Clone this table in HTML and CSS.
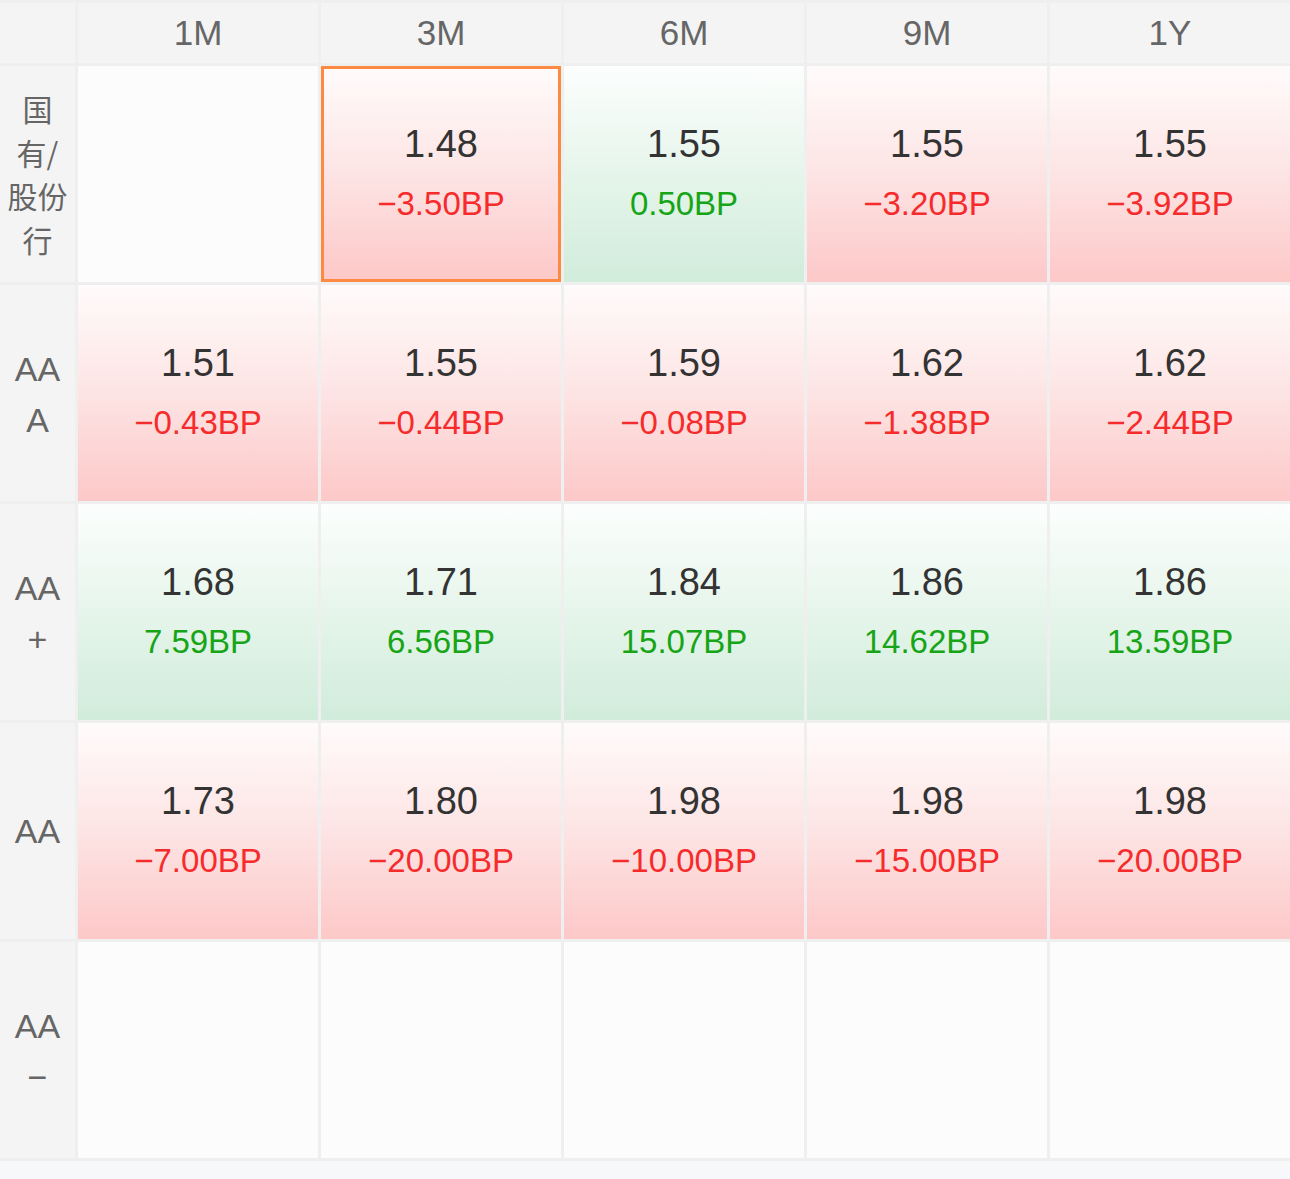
FILE: index.html
```html
<!DOCTYPE html>
<html lang="zh">
<head>
<meta charset="utf-8">
<title>收益率矩阵</title>
<link rel="stylesheet" href="styles.css">
</head>
<body>
<div class="page">
  <div class="grid">
    <div class="head corner"></div>
    <div class="head">1M</div>
    <div class="head">3M</div>
    <div class="head">6M</div>
    <div class="head">9M</div>
    <div class="head">1Y</div>

    <div class="label cjk">国<br>有/<br>股份<br>行</div>
    <div class="cell empty"></div>
    <div class="cell down selected"><span class="val">1.48</span><span class="bp">−3.50BP</span></div>
    <div class="cell up"><span class="val">1.55</span><span class="bp">0.50BP</span></div>
    <div class="cell down"><span class="val">1.55</span><span class="bp">−3.20BP</span></div>
    <div class="cell down"><span class="val">1.55</span><span class="bp">−3.92BP</span></div>

    <div class="label">AA<br>A</div>
    <div class="cell down"><span class="val">1.51</span><span class="bp">−0.43BP</span></div>
    <div class="cell down"><span class="val">1.55</span><span class="bp">−0.44BP</span></div>
    <div class="cell down"><span class="val">1.59</span><span class="bp">−0.08BP</span></div>
    <div class="cell down"><span class="val">1.62</span><span class="bp">−1.38BP</span></div>
    <div class="cell down"><span class="val">1.62</span><span class="bp">−2.44BP</span></div>

    <div class="label">AA<br>+</div>
    <div class="cell up"><span class="val">1.68</span><span class="bp">7.59BP</span></div>
    <div class="cell up"><span class="val">1.71</span><span class="bp">6.56BP</span></div>
    <div class="cell up"><span class="val">1.84</span><span class="bp">15.07BP</span></div>
    <div class="cell up"><span class="val">1.86</span><span class="bp">14.62BP</span></div>
    <div class="cell up"><span class="val">1.86</span><span class="bp">13.59BP</span></div>

    <div class="label single">AA</div>
    <div class="cell down"><span class="val">1.73</span><span class="bp">−7.00BP</span></div>
    <div class="cell down"><span class="val">1.80</span><span class="bp">−20.00BP</span></div>
    <div class="cell down"><span class="val">1.98</span><span class="bp">−10.00BP</span></div>
    <div class="cell down"><span class="val">1.98</span><span class="bp">−15.00BP</span></div>
    <div class="cell down"><span class="val">1.98</span><span class="bp">−20.00BP</span></div>

    <div class="label">AA<br>−</div>
    <div class="cell empty"></div>
    <div class="cell empty"></div>
    <div class="cell empty"></div>
    <div class="cell empty"></div>
    <div class="cell empty"></div>
  </div>
</div>
</body>
</html>
```

FILE: styles.css
```css
html, body {
  margin: 0;
  padding: 0;
  background: #f7f8fa;
}

body {
  font-family: "Liberation Sans", "Noto Sans CJK SC", sans-serif;
  width: 1290px;
  height: 1179px;
  overflow: hidden;
}

.grid {
  display: grid;
  grid-template-columns: 75px repeat(5, 240px);
  grid-template-rows: 60px repeat(5, 216px);
  gap: 3px;
  padding: 3px 0;
  background: #efefef;
}

.head {
  background: #f4f4f4;
  color: #666666;
  font-size: 35px;
  display: flex;
  align-items: center;
  justify-content: center;
}

.label {
  background: #f4f4f4;
  color: #666666;
  font-size: 34px;
  line-height: 51px;
  display: flex;
  align-items: center;
  justify-content: center;
  text-align: center;
  padding-top: 4px;
  box-sizing: border-box;
}

.label.cjk {
  font-family: "Noto Sans CJK SC", sans-serif;
  font-size: 30px;
  line-height: 43.5px;
  padding-top: 0;
}

.label.single {
  padding-top: 0;
}

.cell {
  display: flex;
  flex-direction: column;
  align-items: center;
  justify-content: center;
  box-sizing: border-box;
}

.cell.empty {
  background: #fcfcfc;
}

.cell.down {
  background: linear-gradient(to bottom, #fffbfb 0%, #fde4e4 50%, #fdc8c8 100%);
}

.cell.up {
  background: linear-gradient(to bottom, #fcfefd 0%, #e6f5eb 50%, #d1ecdb 100%);
}

.cell.selected {
  border: 3px solid #fd8a42;
}

.val {
  color: #333333;
  font-size: 38px;
  line-height: 60px;
}

.bp {
  font-size: 33px;
  line-height: 60px;
}

.down .bp {
  color: #f62b2b;
}

.up .bp {
  color: #17a517;
}
```
